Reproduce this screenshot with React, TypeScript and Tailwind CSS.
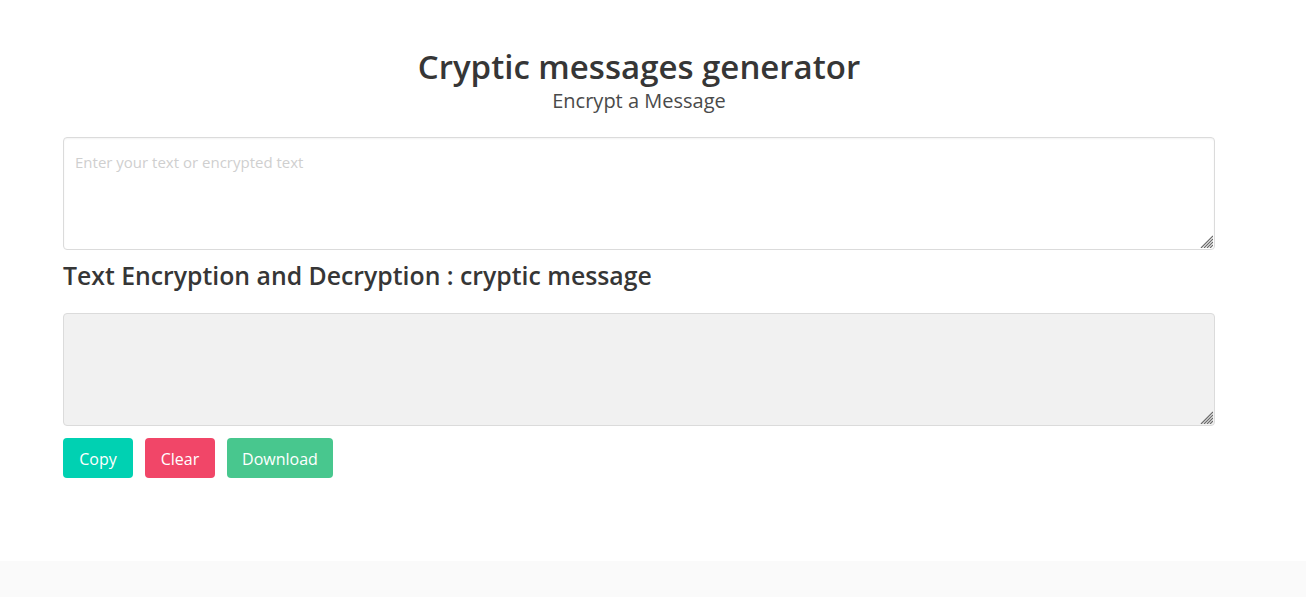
function Grip() {
  return (
    <svg className="absolute right-[2px] bottom-[2px] pointer-events-none" width="13" height="13" viewBox="0 0 13 13">
      <g stroke="#6b6b6b" strokeWidth="1.2">
        <line x1="1" y1="13" x2="13" y2="1" />
        <line x1="4" y1="13" x2="13" y2="4" />
        <line x1="7" y1="13" x2="13" y2="7" />
        <line x1="10" y1="13" x2="13" y2="10" />
      </g>
    </svg>
  )
}

export default function App() {
  return (
    <div className="min-h-[597px] bg-white flex flex-col" style={{ fontFamily: '"Open Sans", sans-serif' }}>
      <section className="pt-[48px] pb-[83px]">
        <div className="ml-[63px] w-[1152px]">
          <div className="text-center">
            <h1 className="text-[33px] leading-[37px] font-semibold text-[#363636]">Cryptic messages generator</h1>
            <h2 className="text-[20px] leading-[25px] text-[#4a4a4a] mt-[3px]">Encrypt a Message</h2>
          </div>
          <div className="relative mt-[24px]">
            <textarea
              className="block w-full h-[113px] resize-none border border-[#dbdbdb] rounded-[4px] px-[11px] pt-[13px] pb-[11px] text-[15px] text-[#363636] placeholder:text-[#cfcfcf] shadow-[inset_0_1px_2px_rgba(10,10,10,0.05)] outline-none"
              placeholder="Enter your text or encrypted text"
            />
            <Grip />
          </div>
          <h3 className="mt-[10px] text-[24.8px] leading-[30px] font-semibold text-[#363636]">
            Text Encryption and Decryption : cryptic message
          </h3>
          <div className="relative mt-[23px]">
            <textarea
              readOnly
              className="block w-full h-[113px] resize-none border border-[#dbdbdb] rounded-[4px] px-[11px] py-[11px] text-[15px] text-[#363636] bg-[#f1f1f1] outline-none"
            />
            <Grip />
          </div>
          <div className="mt-[12px] flex gap-[12px]">
            <button className="h-[40px] w-[70px] pt-[2px] rounded-[4px] bg-[#00d1b2] text-white text-[16px]">Copy</button>
            <button className="h-[40px] w-[70px] pt-[2px] rounded-[4px] bg-[#f14668] text-white text-[16px]">Clear</button>
            <button className="h-[40px] w-[106px] pt-[2px] rounded-[4px] bg-[#48c78e] text-white text-[16px]">Download</button>
          </div>
        </div>
      </section>
      <footer className="flex-1 bg-[#fafafa]" />
    </div>
  )
}
